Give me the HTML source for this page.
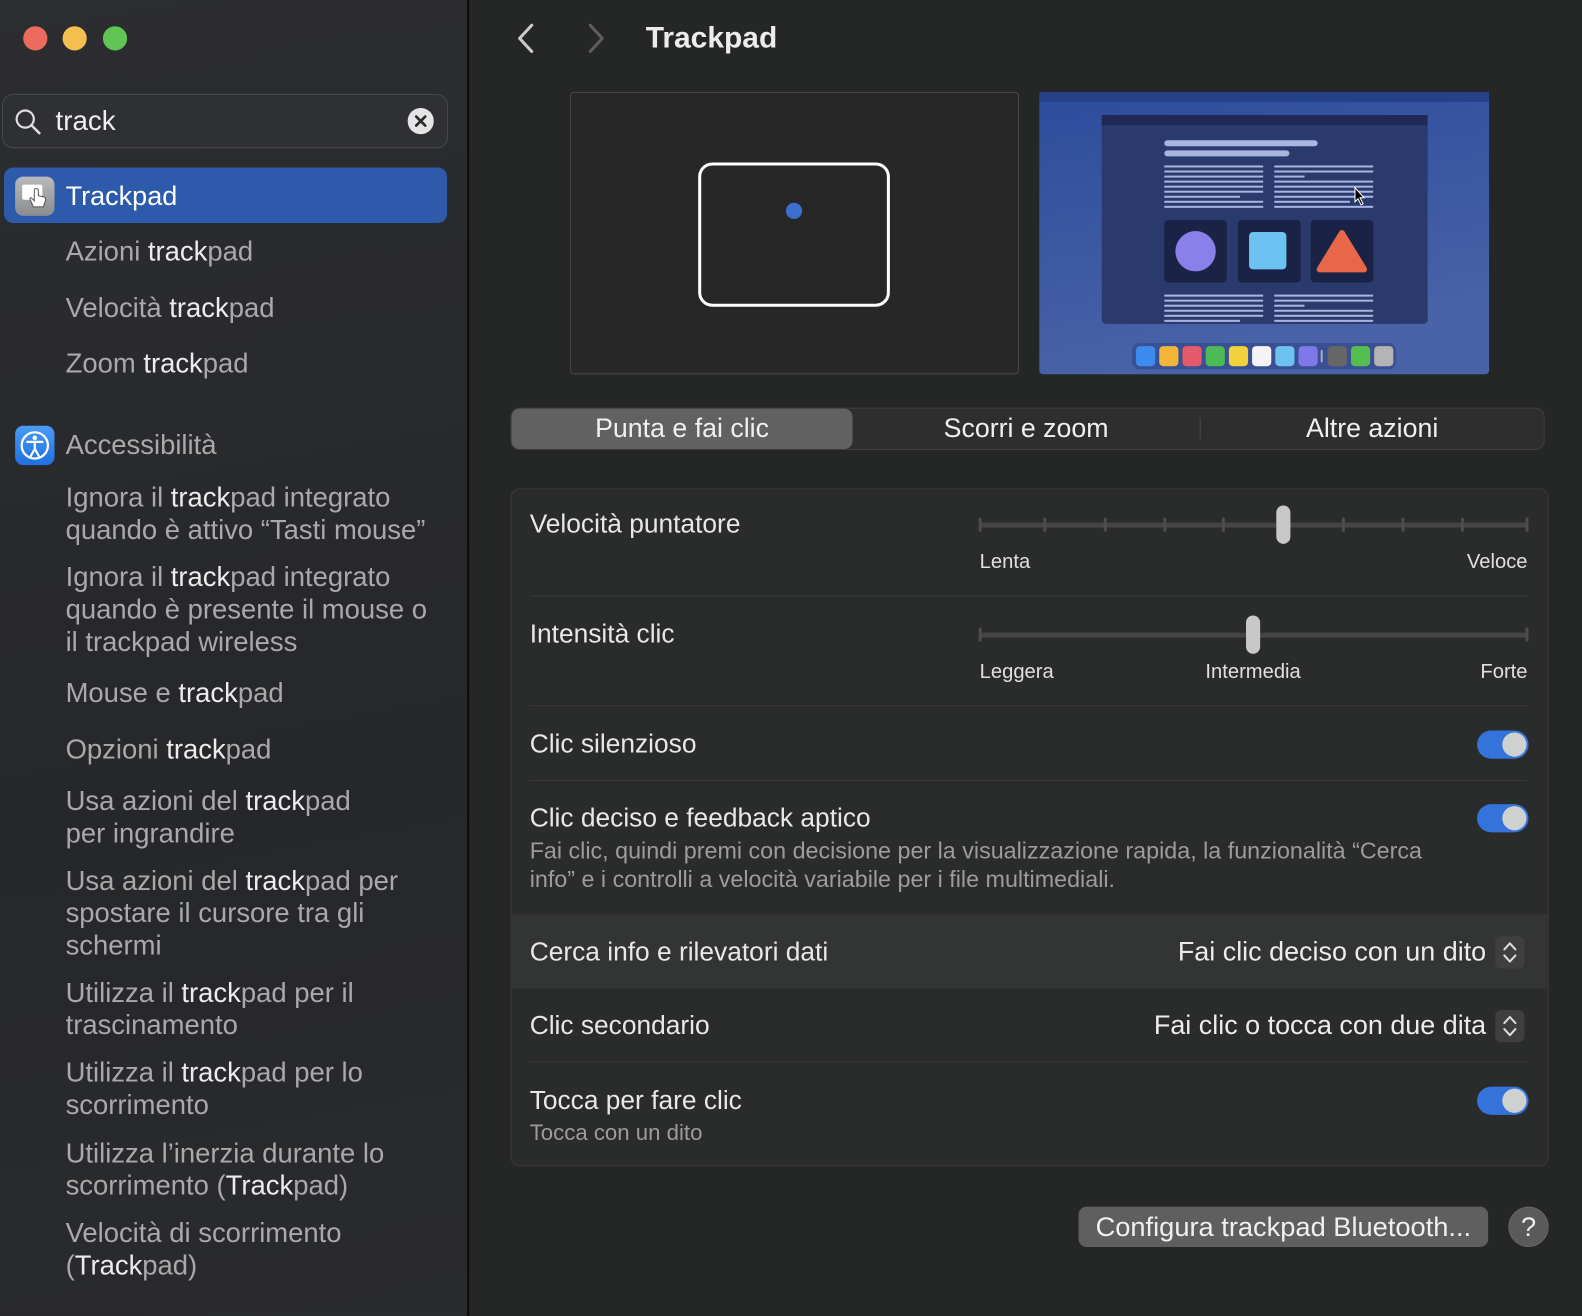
<!DOCTYPE html>
<html><head><meta charset="utf-8"><style>
*{margin:0;padding:0;box-sizing:border-box}
html,body{width:1582px;height:1316px;overflow:hidden;background:#252626}
#w{position:absolute;left:0;top:0;width:1568px;height:1304px;transform:scale(1.00893);transform-origin:0 0;font-family:"Liberation Sans",sans-serif;color:#e6e6e6}
.a{position:absolute;white-space:nowrap}
.t{position:absolute;white-space:nowrap;line-height:32px;height:32px}
#side{position:absolute;left:0;top:0;width:463px;height:1304px;background:linear-gradient(170deg,#2c2d30,#26272a 60%,#2a2b2e)}
#div{position:absolute;left:463px;top:0;width:2px;height:1304px;background:#0b0b0b}
.si{font-size:27.2px;color:#a9a9a9;left:65px}
.si b{font-weight:normal;color:#ececec}
.sep{position:absolute;left:525px;width:989px;height:1px;background:#3a3a3a}
.lbl{font-size:26.1px;color:#e8e8e8;left:525px}
.sm{font-size:20px;color:#e0e0e0}
.tog{position:absolute;left:1464px;width:51px;height:28px;border-radius:14px;background:#3473d9}
.tog::after{content:"";position:absolute;right:2px;top:2px;width:24px;height:24px;border-radius:12px;background:#cfd0d0}
.trk{position:absolute;left:971px;width:544px;height:5px;background:#454545;border-radius:3px}
.tk{position:absolute;width:3px;height:14px;background:#4d4d4d;border-radius:1px}
.th{position:absolute;width:14px;height:38px;border-radius:7px;background:#c8c8c8}
.step{position:absolute;left:1482px;width:29px;height:32px;border-radius:6px;background:#3f3f3f}
.pop{font-size:26.7px;color:#ececec;left:900px;width:573px;text-align:right}
</style></head><body><div id="w">
<div id="side"></div><div id="div"></div>
<div class="a" style="left:23px;top:26px;width:24px;height:24px;border-radius:12px;background:#ec6a5e"></div>
<div class="a" style="left:62px;top:26px;width:24px;height:24px;border-radius:12px;background:#f4bf4f"></div>
<div class="a" style="left:102px;top:26px;width:24px;height:24px;border-radius:12px;background:#61c554"></div>
<div class="a" style="left:2px;top:93px;width:442px;height:54px;border-radius:11px;background:#2f3033;border:1px solid #48494b"></div>
<svg class="a" style="left:14px;top:107px" width="28" height="28" viewBox="0 0 28 28"><circle cx="11" cy="11" r="8.5" fill="none" stroke="#ddd" stroke-width="2.2"/><line x1="17" y1="17" x2="25" y2="25" stroke="#ddd" stroke-width="2.5" stroke-linecap="round"/></svg>
<div class="t" style="left:55px;top:104px;font-size:27.5px;color:#eee">track</div>
<svg class="a" style="left:404px;top:107px" width="26" height="26"><circle cx="13" cy="13" r="13" fill="#e4e4e4"/><path d="M8.5 8.5L17.5 17.5M17.5 8.5L8.5 17.5" stroke="#2a2a2a" stroke-width="2.6" stroke-linecap="round"/></svg>
<div class="a" style="left:4px;top:166px;width:439px;height:55px;border-radius:9px;background:#2d5aab"></div>
<div class="a" style="left:15px;top:175px;width:39px;height:39px;border-radius:8px;background:linear-gradient(#b9babd,#8b8c90)"></div>
<svg class="a" style="left:15px;top:175px" width="39" height="39"><rect x="7" y="8" width="20" height="15" rx="2" fill="#fff"/><path d="M18 30 l-3-7 q-1-2 1-2 l3 3 v-10 q0-2 2-2 q2 0 2 2 v5 l5 1 q3 1 2 4 l-2 6z" fill="#fff" stroke="#555" stroke-width="1"/></svg>
<div class="t" style="left:65px;top:178px;font-size:26.8px;color:#fff">Trackpad</div>
<div class="t si" style="top:233px">Azioni <b>track</b>pad</div>
<div class="t si" style="top:289px">Velocità <b>track</b>pad</div>
<div class="t si" style="top:344px">Zoom <b>track</b>pad</div>
<div class="a" style="left:15px;top:422px;width:39px;height:39px;border-radius:8px;background:linear-gradient(#4a9cf5,#1f6fe0)"></div>
<svg class="a" style="left:15px;top:422px" width="39" height="39"><circle cx="19.5" cy="19.5" r="13" fill="none" stroke="#fff" stroke-width="2.2"/><circle cx="19.5" cy="12" r="2.2" fill="#fff"/><path d="M12 16 h15 M19.5 16 v7 l-4 7 M19.5 23 l4 7" stroke="#fff" stroke-width="2.2" fill="none" stroke-linecap="round"/></svg>
<div class="t si" style="top:425px">Accessibilità</div>
<div class="t si" style="top:477px">Ignora il <b>track</b>pad integrato</div>
<div class="t si" style="top:509px">quando è attivo “Tasti mouse”</div>
<div class="t si" style="top:556px">Ignora il <b>track</b>pad integrato</div>
<div class="t si" style="top:588px">quando è presente il mouse o</div>
<div class="t si" style="top:620px">il trackpad wireless</div>
<div class="t si" style="top:671px">Mouse e <b>track</b>pad</div>
<div class="t si" style="top:727px">Opzioni <b>track</b>pad</div>
<div class="t si" style="top:778px">Usa azioni del <b>track</b>pad</div>
<div class="t si" style="top:810px">per ingrandire</div>
<div class="t si" style="top:857px">Usa azioni del <b>track</b>pad per</div>
<div class="t si" style="top:889px">spostare il cursore tra gli</div>
<div class="t si" style="top:921px">schermi</div>
<div class="t si" style="top:968px">Utilizza il <b>track</b>pad per il</div>
<div class="t si" style="top:1000px">trascinamento</div>
<div class="t si" style="top:1047px">Utilizza il <b>track</b>pad per lo</div>
<div class="t si" style="top:1079px">scorrimento</div>
<div class="t si" style="top:1127px">Utilizza l’inerzia durante lo</div>
<div class="t si" style="top:1159px">scorrimento (<b>Track</b>pad)</div>
<div class="t si" style="top:1206px">Velocità di scorrimento</div>
<div class="t si" style="top:1238px">(<b>Track</b>pad)</div>

<svg class="a" style="left:508px;top:22px" width="26" height="32"><path d="M19 3 L7 16 L19 29" fill="none" stroke="#ccc" stroke-width="3" stroke-linecap="round" stroke-linejoin="round"/></svg>
<svg class="a" style="left:578px;top:22px" width="26" height="32"><path d="M7 3 L19 16 L7 29" fill="none" stroke="#5e5e5e" stroke-width="3" stroke-linecap="round" stroke-linejoin="round"/></svg>
<div class="t" style="left:640px;top:22px;font-size:29.7px;font-weight:bold;color:#ececec">Trackpad</div>

<div class="a" style="left:565px;top:91px;width:445px;height:280px;border:1px solid #484848;border-radius:4px;background:#272727"></div>
<div class="a" style="left:692px;top:161px;width:190px;height:143px;border:3.5px solid #fff;border-radius:14px"></div>
<div class="a" style="left:779px;top:201px;width:16px;height:16px;border-radius:8px;background:#3d6fd0"></div>

<svg class="a" style="left:1030px;top:91px" width="446" height="280" viewBox="0 0 446 280">
<defs><linearGradient id="g" x1="0" y1="0" x2="0.3" y2="1"><stop offset="0" stop-color="#2c4c9c"/><stop offset="1" stop-color="#4a63a8"/></linearGradient></defs>
<rect width="446" height="280" rx="4" fill="url(#g)"/><rect width="446" height="10" fill="#26408a"/>
<rect x="62" y="23" width="323" height="207" rx="4" fill="#2a3a6c"/><rect x="62" y="23" width="323" height="10" fill="#1e2a55"/>
<rect x="124" y="48" width="152" height="6" rx="3" fill="#a9b5e0"/><rect x="124" y="58" width="124" height="6" rx="3" fill="#a9b5e0"/>
<g fill="#a9b5e0"><rect x="124" y="73" width="98" height="2"/><rect x="124" y="78" width="98" height="2"/><rect x="124" y="83" width="98" height="2"/><rect x="124" y="88" width="98" height="2"/><rect x="124" y="93" width="98" height="2"/><rect x="124" y="98" width="98" height="2"/><rect x="124" y="103" width="75" height="2"/><rect x="124" y="108" width="98" height="2"/><rect x="124" y="113" width="98" height="2"/>
<rect x="233" y="73" width="98" height="2"/><rect x="233" y="78" width="98" height="2"/><rect x="233" y="83" width="30" height="2"/><rect x="233" y="88" width="98" height="2"/><rect x="233" y="93" width="98" height="2"/><rect x="233" y="98" width="98" height="2"/><rect x="233" y="103" width="98" height="2"/><rect x="233" y="108" width="75" height="2"/><rect x="233" y="113" width="98" height="2"/>
<rect x="124" y="201" width="98" height="2"/><rect x="124" y="206" width="98" height="2"/><rect x="124" y="211" width="98" height="2"/><rect x="124" y="216" width="98" height="2"/><rect x="124" y="221" width="98" height="2"/><rect x="124" y="226" width="75" height="2"/>
<rect x="233" y="201" width="98" height="2"/><rect x="233" y="206" width="98" height="2"/><rect x="233" y="211" width="30" height="2"/><rect x="233" y="216" width="98" height="2"/><rect x="233" y="221" width="98" height="2"/><rect x="233" y="226" width="98" height="2"/></g>
<rect x="124" y="127" width="62" height="62" rx="4" fill="#1a2246"/><rect x="197" y="127" width="62" height="62" rx="4" fill="#1a2246"/><rect x="269" y="127" width="62" height="62" rx="4" fill="#1a2246"/>
<circle cx="155" cy="158" r="20" fill="#8a80ea"/><rect x="208" y="139" width="37" height="37" rx="4" fill="#6cc3f0"/><path d="M300 140 L322 176 L278 176Z" fill="#e8674a" stroke="#e8674a" stroke-width="6" stroke-linejoin="round"/>
<path d="M313 95 l0 14 l3-3 l3 6 l2-1 l-3-6 l4 0z" fill="#000" stroke="#fff" stroke-width="1"/>
<rect x="92" y="249" width="262" height="26" rx="8" fill="#3a5092"/>
<g><rect x="96" y="252" width="19" height="20" rx="4" fill="#3c8cf0"/><rect x="119" y="252" width="19" height="20" rx="4" fill="#f2b53a"/><rect x="142" y="252" width="19" height="20" rx="4" fill="#e45a6a"/><rect x="165" y="252" width="19" height="20" rx="4" fill="#4cbb55"/><rect x="188" y="252" width="19" height="20" rx="4" fill="#f2d23c"/><rect x="211" y="252" width="19" height="20" rx="4" fill="#f4f4f4"/><rect x="234" y="252" width="19" height="20" rx="4" fill="#6cc3f0"/><rect x="257" y="252" width="19" height="20" rx="4" fill="#7f78e8"/><rect x="279" y="256" width="2" height="12" fill="#aab"/><rect x="286" y="252" width="19" height="20" rx="4" fill="#666"/><rect x="309" y="252" width="19" height="20" rx="4" fill="#56bd4f"/><rect x="332" y="252" width="19" height="20" rx="4" fill="#b4b4b4"/></g>
</svg>

<div class="a" style="left:506px;top:404px;width:1025px;height:42px;border-radius:9px;background:#2e2e2e;border:1px solid #3e3e3e"></div>
<div class="a" style="left:507px;top:405px;width:338px;height:40px;border-radius:8px;background:#616161"></div>
<div class="a" style="left:1189px;top:414px;width:1px;height:22px;background:#4a4a4a"></div>
<div class="t" style="left:507px;width:338px;text-align:center;top:408px;font-size:26.5px;color:#f0f0f0">Punta e fai clic</div>
<div class="t" style="left:846px;width:342px;text-align:center;top:408px;font-size:26.5px;color:#f0f0f0">Scorri e zoom</div>
<div class="t" style="left:1190px;width:340px;text-align:center;top:408px;font-size:26.5px;color:#f0f0f0">Altre azioni</div>

<div class="a" style="left:506px;top:484px;width:1029px;height:672px;border-radius:9px;background:#2a2b2b;border:1px solid #3b3b3b;overflow:hidden"><div style="position:absolute;left:0;top:421px;width:1029px;height:74px;background:#333434"></div></div>

<div class="t lbl" style="top:503px">Velocità puntatore</div>
<div class="trk" style="top:518px"></div>
<div class="tk" style="left:970px;top:513px"></div><div class="tk" style="left:1034px;top:513px"></div><div class="tk" style="left:1094px;top:513px"></div><div class="tk" style="left:1153px;top:513px"></div><div class="tk" style="left:1211px;top:513px"></div><div class="tk" style="left:1330px;top:513px"></div><div class="tk" style="left:1389px;top:513px"></div><div class="tk" style="left:1448px;top:513px"></div><div class="tk" style="left:1512px;top:513px"></div>
<div class="th" style="left:1265px;top:501px"></div>
<div class="t sm" style="left:971px;top:541px">Lenta</div>
<div class="t sm" style="left:1414px;width:100px;text-align:right;top:541px">Veloce</div>
<div class="sep" style="top:590px"></div>

<div class="t lbl" style="top:612px">Intensità clic</div>
<div class="trk" style="top:627px"></div>
<div class="tk" style="left:970px;top:622px"></div><div class="tk" style="left:1512px;top:622px"></div>
<div class="th" style="left:1235px;top:610px"></div>
<div class="t sm" style="left:971px;top:650px">Leggera</div>
<div class="t sm" style="left:1142px;width:200px;text-align:center;top:650px">Intermedia</div>
<div class="t sm" style="left:1414px;width:100px;text-align:right;top:650px">Forte</div>
<div class="sep" style="top:699px"></div>

<div class="t lbl" style="top:721px">Clic silenzioso</div>
<div class="tog" style="top:724px"></div>
<div class="sep" style="top:773px"></div>

<div class="t lbl" style="top:794px">Clic deciso e feedback aptico</div>
<div class="tog" style="top:797px"></div>
<div class="a" style="left:525px;top:829px;font-size:23.1px;line-height:28px;color:#9c9c9c;white-space:normal;width:925px">Fai clic, quindi premi con decisione per la visualizzazione rapida, la funzionalità “Cerca info” e i controlli a velocità variabile per i file multimediali.</div>

<div class="t lbl" style="top:927px">Cerca info e rilevatori dati</div>
<div class="t pop" style="top:927px">Fai clic deciso con un dito</div>
<div class="step" style="top:928px"></div>
<svg class="a" style="left:1482px;top:928px" width="29" height="32"><path d="M9 13 l5.5-6 l5.5 6 M9 19 l5.5 6 l5.5-6" fill="none" stroke="#ddd" stroke-width="2" stroke-linecap="round" stroke-linejoin="round"/></svg>

<div class="t lbl" style="top:1000px">Clic secondario</div>
<div class="t pop" style="top:1000px">Fai clic o tocca con due dita</div>
<div class="step" style="top:1001px"></div>
<svg class="a" style="left:1482px;top:1001px" width="29" height="32"><path d="M9 13 l5.5-6 l5.5 6 M9 19 l5.5 6 l5.5-6" fill="none" stroke="#ddd" stroke-width="2" stroke-linecap="round" stroke-linejoin="round"/></svg>
<div class="sep" style="top:1052px"></div>

<div class="t lbl" style="top:1074px">Tocca per fare clic</div>
<div class="tog" style="top:1077px"></div>
<div class="t" style="left:525px;top:1107px;font-size:22px;color:#9c9c9c">Tocca con un dito</div>

<div class="a" style="left:1069px;top:1196px;width:406px;height:40px;border-radius:8px;background:#5f5f5f"></div>
<div class="t" style="left:1069px;width:406px;text-align:center;top:1200px;font-size:27px;color:#f0f0f0">Configura trackpad Bluetooth...</div>
<div class="a" style="left:1495px;top:1196px;width:40px;height:40px;border-radius:20px;background:#5a5a5a;border:1px solid #666;text-align:center;line-height:38px;font-size:27px;color:#eee">?</div>
</div></body></html>
